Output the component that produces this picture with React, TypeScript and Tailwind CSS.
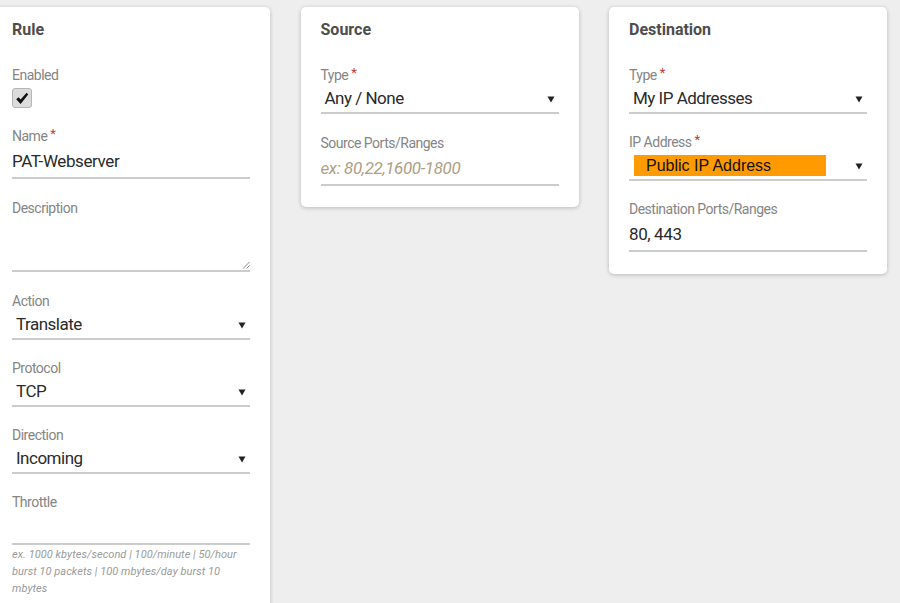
import React from "react";

const font = { fontFamily: "Roboto, 'Noto Sans', sans-serif" };

function Req() {
  return <span className="ml-[3px] text-[#c0393b] text-[13px] tracking-normal relative top-[-3px]">*</span>;
}

function Label({ children, req }: { children: React.ReactNode; req?: boolean }) {
  return (
    <div className="h-[16px] leading-[16px] text-[14px] tracking-[-0.5px] text-[#858585] whitespace-nowrap">
      {children}
      {req && <Req />}
    </div>
  );
}

function Arrow() {
  return (
    <svg width="8" height="7" viewBox="0 0 8 7" className="absolute right-[4px] top-[12px]">
      <path d="M0.5 0.5 H7.5 L4 6.5 Z" fill="#222" />
    </svg>
  );
}

function Select({ value, highlight }: { value: string; highlight?: boolean }) {
  return (
    <div className="relative h-[30px] border-b-2 border-[#cccccc] mt-px">
      {highlight ? (
        <div className="absolute left-[5px] top-[4px] w-[192px] h-[21px] bg-[#ff9a00] pl-[12px] text-[16px] leading-[21px] text-[#111]" style={{ fontFamily: "'Liberation Sans', Arial, sans-serif" }}>
          {value}
        </div>
      ) : (
        <div className="pl-[4px] text-[17px] tracking-[-0.5px] leading-[28px] text-[#2a2a2a]">{value}</div>
      )}
      <Arrow />
    </div>
  );
}

function Input({ value, placeholder }: { value?: string; placeholder?: string }) {
  return (
    <div className="h-[34px] border-b-2 border-[#cccccc] mt-px">
      {value ? (
        <div className="text-[17px] tracking-[-0.4px] leading-[32px] text-[#2a2a2a]">{value}</div>
      ) : placeholder ? (
        <div className="text-[17px] tracking-[-0.4px] leading-[32px] italic text-[#ad9f84]">{placeholder}</div>
      ) : null}
    </div>
  );
}

function Card({ title, children, className }: { title: string; children: React.ReactNode; className?: string }) {
  return (
    <div className={"w-[278px] shrink-0 bg-white rounded-[5px] shadow-[0_1px_4px_rgba(0,0,0,0.22)] px-5 pt-[13px] " + (className || "")}>
      <div className="h-[20px] leading-[20px] text-[16px] font-bold text-[#4d4d4d]">{title}</div>
      {children}
    </div>
  );
}

export default function App() {
  return (
    <div className="w-[900px] h-[603px] overflow-hidden bg-[#eeeeee]" style={font}>
      <div className="flex items-start gap-[30.5px] pt-[7px] ml-[-8px]">
        <Card title="Rule" className="h-[640px]">
          <div className="mt-[27px]">
            <Label>Enabled</Label>
            <div className="mt-[5px] w-[20px] h-[20px] rounded-[3px] bg-[#dcdcdc] border border-[#b5b5b5] flex items-center justify-center">
              <svg width="14" height="13" viewBox="0 0 14 13">
                <path d="M1.2 7.2 L3.6 5.2 L5.6 7.6 L11.6 0.8 L13.2 2.4 L5.6 12 Z" fill="#111" />
              </svg>
            </div>
          </div>
          <div className="mt-[20px]">
            <Label req>Name</Label>
            <Input value="PAT-Webserver" />
          </div>
          <div className="mt-[21px]">
            <Label>Description</Label>
            <div className="relative h-[55px] border-b-2 border-[#cccccc] mt-px">
              <svg width="8" height="8" viewBox="0 0 8 8" className="absolute right-0 bottom-[1px]">
                <path d="M7.5 1 L1 7.5 M7.5 4.5 L4.5 7.5" stroke="#888" strokeWidth="1" />
              </svg>
            </div>
          </div>
          <div className="mt-[21px]">
            <Label>Action</Label>
            <Select value="Translate" />
          </div>
          <div className="mt-[20px]">
            <Label>Protocol</Label>
            <Select value="TCP" />
          </div>
          <div className="mt-[20px]">
            <Label>Direction</Label>
            <Select value="Incoming" />
          </div>
          <div className="mt-[20px]">
            <Label>Throttle</Label>
            <Input />
            <div className="text-[11px] tracking-[0.05px] leading-[17px] italic text-[#9a9a9a] mt-[1px]">
              ex. 1000 kbytes/second | 100/minute | 50/hour burst 10 packets | 100 mbytes/day burst 10 mbytes
            </div>
          </div>
        </Card>
        <Card title="Source" className="pb-[21px]">
          <div className="mt-[27px]">
            <Label req>Type</Label>
            <Select value="Any / None" />
          </div>
          <div className="mt-[21px]">
            <Label>Source Ports/Ranges</Label>
            <Input placeholder="ex: 80,22,1600-1800" />
          </div>
        </Card>
        <Card title="Destination" className="pb-[22px]">
          <div className="mt-[27px]">
            <Label req>Type</Label>
            <Select value="My IP Addresses" />
          </div>
          <div className="mt-[20px]">
            <Label req>IP Address</Label>
            <Select value="Public IP Address" highlight />
          </div>
          <div className="mt-[20px]">
            <Label>Destination Ports/Ranges</Label>
            <Input value="80, 443" />
          </div>
        </Card>
      </div>
    </div>
  );
}
